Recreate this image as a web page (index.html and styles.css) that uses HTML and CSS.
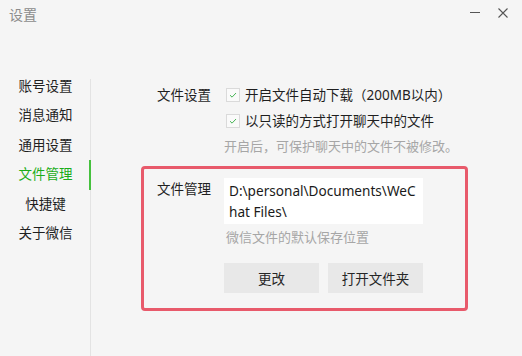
FILE: index.html
```html
<!doctype html>
<html lang="zh-CN">
  <head>
    <meta charset="UTF-8">
    <meta name="viewport" content="width=device-width, initial-scale=1.0">
    <title>设置</title>
    <link rel="stylesheet" href="styles.css">
  </head>
  <body>

    <div class="titlebar">
      <span class="title">设置</span>
      <div class="win-ctrls">
        <svg class="win-btn" width="10" height="10" viewBox="0 0 10 10"><path d="M0 4.5h10" stroke="#555" stroke-width="1"/></svg>
        <svg class="win-btn" width="10" height="10" viewBox="0 0 10 10"><path d="M0.5 0.5l9 9M9.5 0.5l-9 9" stroke="#555" stroke-width="1.1"/></svg>
      </div>
    </div>

    <div class="main">
      <ul class="side-nav">
        <li class="nav-item">账号设置</li>
        <li class="nav-item">消息通知</li>
        <li class="nav-item">通用设置</li>
        <li class="nav-item active">文件管理</li>
        <li class="nav-item">快捷键</li>
        <li class="nav-item">关于微信</li>
      </ul>

      <div class="content">
        <div class="section">
          <div class="row">
            <span class="label">文件设置</span>
            <span class="check"><svg width="14" height="14" viewBox="0 0 14 14"><path d="M3.5 7.2l2.4 2.3 4.6-4.8" fill="none" stroke="#3cb04a" stroke-width="1.1"/></svg></span>
            <span class="opt">开启文件自动下载（200MB以内）</span>
          </div>
          <div class="row">
            <span class="label"></span>
            <span class="check"><svg width="14" height="14" viewBox="0 0 14 14"><path d="M3.5 7.2l2.4 2.3 4.6-4.8" fill="none" stroke="#3cb04a" stroke-width="1.1"/></svg></span>
            <span class="opt">以只读的方式打开聊天中的文件</span>
          </div>
          <div class="row">
            <span class="label"></span>
            <span class="hint">开启后，可保护聊天中的文件不被修改。</span>
          </div>
        </div>

        <div class="highlight-box">
          <div class="path-row">
            <span class="label">文件管理</span>
            <div class="path-col">
              <div class="path-input">D:\personal\Documents\WeChat Files\</div>
              <div class="hint">微信文件的默认保存位置</div>
              <div class="btns">
                <button class="btn">更改</button>
                <button class="btn">打开文件夹</button>
              </div>
            </div>
          </div>
        </div>
      </div>
    </div>

  </body>
</html>
```

FILE: styles.css
```css
* {
  box-sizing: border-box;
}

body {
  margin: 0;
  width: 522px;
  height: 356px;
  overflow: hidden;
  background: #f5f5f5;
  color: #1f1f1f;
  font-family: "Segoe UI", "Noto Sans", "Noto Sans CJK SC", sans-serif;
  font-size: 13.5px;
}

/* title bar */
.titlebar {
  height: 72px;
  display: flex;
  justify-content: space-between;
  align-items: flex-start;
  padding: 7px 14px 0 9px;
}

.title {
  color: #8c8c8c;
  font-size: 14px;
  line-height: 16px;
}

.win-ctrls {
  display: flex;
  gap: 18px;
  margin-top: 1px;
}

.win-btn {
  display: block;
}

/* main */
.main {
  display: flex;
  height: 284px;
}

.side-nav {
  list-style: none;
  margin: 0;
  padding: 0;
  width: 90px;
  flex-shrink: 0;
}

.nav-item {
  position: relative;
  height: 29.4px;
  line-height: 29.4px;
  text-align: center;
  padding-left: 1px;
}

.nav-item.active {
  color: #1aad19;
}

.nav-item.active::after {
  content: "";
  position: absolute;
  right: -1px;
  top: 0;
  width: 2px;
  height: 30px;
  background: #46c13e;
}

.content {
  flex: 1;
  margin-top: 7px;
  border-left: 1px solid #e3e3e3;
  padding: 2px 0 0 50px;
}

.section {
  padding-left: 16px;
}

.row {
  display: flex;
  align-items: center;
  height: 26px;
}

.label {
  width: 68px;
  flex-shrink: 0;
}

.check {
  width: 14px;
  height: 14px;
  border: 1px solid #dadada;
  background: #fafafa;
  margin: 1px 5px 0 1px;
  display: flex;
  align-items: center;
  justify-content: center;
}

.check svg {
  display: block;
}

.hint {
  color: #a6a6a6;
  font-size: 13px;
  line-height: 26px;
}

.row .hint {
  margin-left: -1px;
}

/* highlighted block */
.highlight-box {
  margin-top: 7px;
  width: 327px;
  border: 3px solid #e85a6b;
  border-radius: 4px;
  padding: 9px 0 15px 13px;
}

.path-row {
  display: flex;
  align-items: flex-start;
}

.path-row .label {
  width: 67px;
  line-height: 22px;
}

.path-input {
  width: 199px;
  background: #fff;
  padding: 2px 5px;
  line-height: 21px;
  font-size: 13.6px;
  word-break: break-all;
  color: #1a1a1a;
}

.path-col .hint {
  padding-left: 2px;
}

.btns {
  display: flex;
  gap: 9px;
  margin-top: 13px;
}

.btn {
  width: 95px;
  height: 30px;
  border: none;
  background: #e8e8e8;
  font-family: inherit;
  font-size: 13.5px;
  color: #262626;
  padding: 0;
}
```
